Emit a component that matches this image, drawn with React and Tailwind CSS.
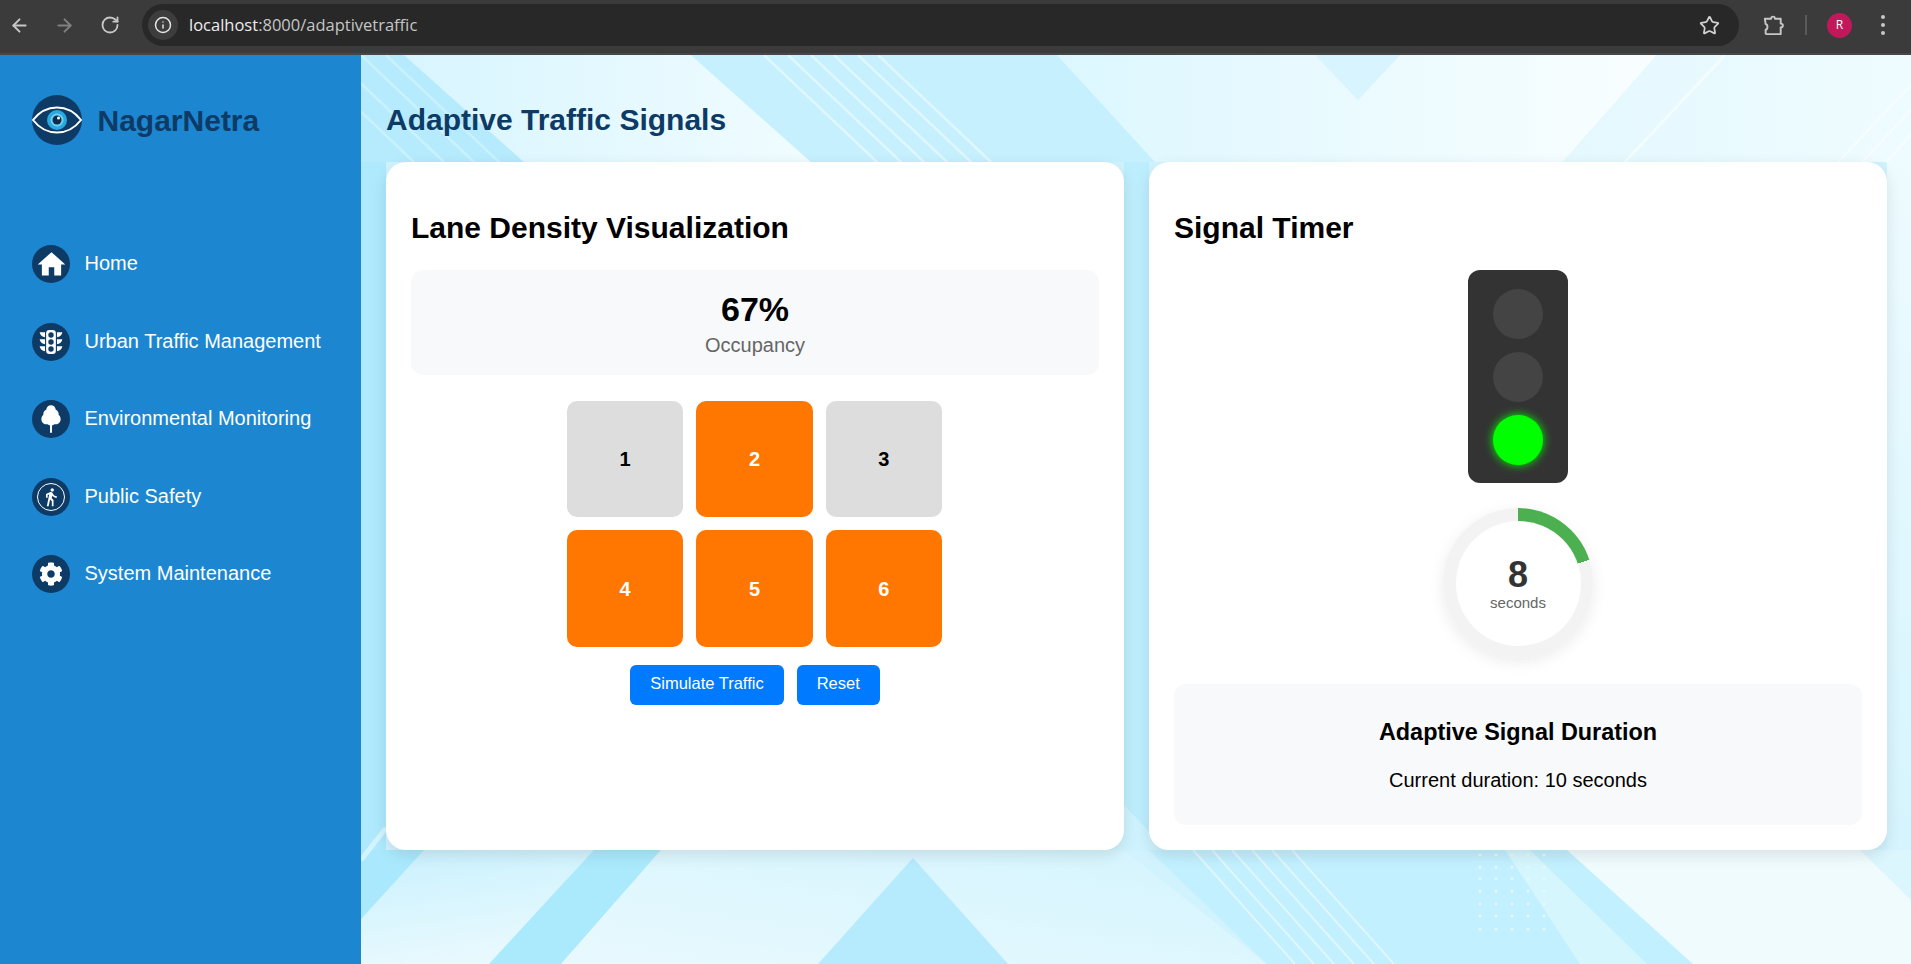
import { ArrowLeft, ArrowRight, RotateCw, Info, Star } from 'lucide-react';
import { FaCog } from 'react-icons/fa';
import { MdDirectionsWalk, MdHome } from 'react-icons/md';

const sans = "font-['Liberation_Sans',Arial,sans-serif]";

function BrowserBar() {
  return (
    <div className="h-[55px] bg-[#3b3b3b] border-b-2 border-[#474747] pb-[3px] flex items-center font-['Open_Sans',sans-serif]">
      <div className="w-[142px] shrink-0 flex items-center pl-[9px] gap-[24px] text-[#c7c7c7]">
        <ArrowLeft className="w-[21px] h-[21px]" strokeWidth={2.2} />
        <ArrowRight className="w-[21px] h-[21px] text-[#808080]" strokeWidth={2.2} />
        <RotateCw className="w-[20px] h-[20px] ml-[1px]" strokeWidth={2.2} />
      </div>
      <div className="w-[1597px] h-[42px] bg-[#282828] rounded-full flex items-center pl-[6px] pr-[19px]">
        <div className="w-[30px] h-[30px] rounded-full bg-[#3d3d3d] flex items-center justify-center text-[#e4e4e4]">
          <Info className="w-[18px] h-[18px]" strokeWidth={2} />
        </div>
        <div className="ml-[11px] text-[16.500px] text-[#c4c7c5]">
          <span className="text-[#ededed]">localhost</span>:8000/adaptivetraffic
        </div>
        <Star className="w-[21px] h-[21px] ml-auto text-[#d0d0d0]" strokeWidth={2} />
      </div>
      <div className="flex-1 flex items-center pl-[23px]">
        <svg viewBox="0 0 24 24" className="w-[23px] h-[23px]" fill="none" stroke="#c7c7c7" strokeWidth="2" strokeLinejoin="round">
          <path d="M3 5h6.500c0-3 4-3 4 0h6v5c3 0 3 4 0 4v7H5c-.8 0-1.200-.5-1.200-1v-3.500c2.500-.5 2.500-5.500 0-6L3 5z" />
        </svg>
        <div className="w-[2px] h-[20px] bg-[#5a5a5a] ml-[20px]" />
        <div className="w-[25px] h-[25px] rounded-full bg-[#c2185b] ml-[20px] flex items-center justify-center text-white text-[12px]">R</div>
        <div className="ml-[29px] flex flex-col gap-[4px]">
          <div className="w-[4px] h-[4px] rounded-full bg-[#c7c7c7]" />
          <div className="w-[4px] h-[4px] rounded-full bg-[#c7c7c7]" />
          <div className="w-[4px] h-[4px] rounded-full bg-[#c7c7c7]" />
        </div>
      </div>
    </div>
  );
}

function Logo() {
  return (
    <svg viewBox="0 0 50 50" className="w-[50px] h-[50px] shrink-0">
      <circle cx="25" cy="25" r="25" fill="#0d3b66" />
      <path d="M1 25C8 16 16 12.500 25 12.500S42 16 49 25C42 34 34 37.500 25 37.500S8 34 1 25z" fill="none" stroke="white" strokeWidth="2" />
      <circle cx="25" cy="25" r="10" fill="#29a9e0" />
      <circle cx="25" cy="25" r="6.500" fill="#6fd0f2" />
      <circle cx="25" cy="25" r="4.500" fill="#0d2b4a" />
      <circle cx="26.500" cy="23" r="1.500" fill="white" />
    </svg>
  );
}

function TrafficIcon() {
  return (
    <svg viewBox="0 0 24 24" className="w-[26px] h-[26px]" fill="white">
      <rect x="7.500" y="1" width="9" height="22" rx="3" />
      <circle cx="12" cy="5.500" r="2.500" fill="#0d3b66" />
      <circle cx="12" cy="12" r="2.500" fill="#0d3b66" />
      <circle cx="12" cy="18.500" r="2.500" fill="#0d3b66" />
      <path d="M1.500 3h5v4.500C4 7.500 2 5.500 1.500 3zM1.500 9.500h5V14C4 14 2 12 1.500 9.500zM1.500 16h5v4.500C4 20.500 2 18.500 1.500 16z" />
      <path d="M22.500 3h-5v4.500c2.500 0 4.500-2 5-4.500zM22.500 9.500h-5V14c2.500 0 4.500-2 5-4.500zM22.500 16h-5v4.500c2.500 0 4.500-2 5-4.500z" />
    </svg>
  );
}

function TreeIcon() {
  return (
    <svg viewBox="0 0 24 24" className="w-[30px] h-[30px]" fill="white">
      <path d="M12 1c-2.200 0-3.600 1.700-3.800 3.600C6.600 5.300 5.600 6.900 5.900 8.600 4.500 9.800 3.900 11.800 4.500 13.500c.7 1.900 2.600 3 4.700 2.700.8.600 1.500.9 2 .9V23h1.600v-5.900c.5 0 1.200-.3 2-.9 2.100.3 4-.8 4.700-2.700.6-1.700 0-3.700-1.400-4.900.3-1.700-.7-3.300-2.300-4C15.600 2.700 14.200 1 12 1z" />
    </svg>
  );
}

function WalkIcon() {
  return (
    <div className="w-[28px] h-[28px] rounded-full border-[1.500px] border-white flex items-center justify-center">
      <MdDirectionsWalk className="w-[20px] h-[20px] text-white" />
    </div>
  );
}

const navItems = [
  { label: 'Home', icon: <MdHome className="w-[33px] h-[33px] text-white" /> },
  { label: 'Urban Traffic Management', icon: <TrafficIcon /> },
  { label: 'Environmental Monitoring', icon: <TreeIcon /> },
  { label: 'Public Safety', icon: <WalkIcon /> },
  { label: 'System Maintenance', icon: <FaCog className="w-[24px] h-[24px] text-white" /> },
];

function Sidebar() {
  return (
    <aside className="w-[361px] shrink-0 bg-[#1c86d1] pl-[32px] pt-[40px]">
      <div className="flex items-center gap-[15.500px]">
        <Logo />
        <span className="text-[30px] font-bold text-[#0d3b66]">NagarNetra</span>
      </div>
      <nav className="mt-[100px] flex flex-col gap-[39.600px]">
        {navItems.map((item) => (
          <div key={item.label} className="flex items-center gap-[14.500px] text-white text-[20px]">
            <div className="w-[38px] h-[38px] rounded-full bg-[#0d3b66] flex items-center justify-center">
              {item.icon}
            </div>
            <span className="pb-[2px]">{item.label}</span>
          </div>
        ))}
      </nav>
    </aside>
  );
}

// decorative backdrop artwork, coordinates are page pixels
function Backdrop() {
  const hatchTop = [764, 788, 811, 834, 858, 878];
  const hatchCorner = [-60, -30, 0, 25];
  const hatchBottom = [1193, 1212, 1232, 1252, 1272, 1292];
  const dotXs = [1480, 1496, 1512, 1528, 1544];
  const dotYs = [855, 867, 879, 891, 904, 916, 929];
  return (
    <svg viewBox="361 55 1550 909" preserveAspectRatio="none" className="absolute inset-0 w-full h-full blur-[0.6px]">
      <defs>
        <linearGradient id="leftLight" x1="0" y1="0" x2="1" y2="0">
          <stop offset="0" stopColor="#d8f5ff" />
          <stop offset="1" stopColor="#f0fcff" />
        </linearGradient>
        <linearGradient id="topMid" x1="0" y1="0" x2="1" y2="0">
          <stop offset="0" stopColor="#dcf7ff" />
          <stop offset="1" stopColor="#f9feff" />
        </linearGradient>
        <linearGradient id="topRight" x1="0" y1="0" x2="1" y2="0">
          <stop offset="0" stopColor="#e4f8fe" />
          <stop offset="1" stopColor="#effcff" />
        </linearGradient>
        <linearGradient id="botLight" x1="0" y1="0" x2="0.300" y2="1">
          <stop offset="0" stopColor="#c9f1fe" />
          <stop offset="1" stopColor="#e8f9fe" />
        </linearGradient>
        <linearGradient id="botMid" x1="0" y1="1" x2="1" y2="0">
          <stop offset="0" stopColor="#e8f9fe" />
          <stop offset="1" stopColor="#d4f4fe" />
        </linearGradient>
        <linearGradient id="sideRight" x1="0" y1="0" x2="0" y2="1">
          <stop offset="0" stopColor="#eefbff" />
          <stop offset="1" stopColor="#d6f4fe" />
        </linearGradient>
      </defs>
      <rect x="361" y="55" width="1550" height="909" fill="#d0f3fe" />

      {/* upper left */}
      <polygon points="361,55 404,55 524,162 361,162" fill="#b5ebfd" />
      <g stroke="#c9f1fe" strokeWidth="2.500" fill="none">
        {hatchCorner.map((x) => (
          <line key={x} x1={361 + x} y1="55" x2={361 + x + 113} y2="162" />
        ))}
      </g>
      <polygon points="404,55 691,55 811,162 524,162" fill="url(#leftLight)" />

      {/* upper middle band */}
      <polygon points="691,55 1057,55 1155,162 811,162" fill="#c6f0fe" />
      <g stroke="#dff7ff" strokeWidth="2.500" fill="none">
        {hatchTop.map((x) => (
          <line key={x} x1={x} y1="55" x2={x + 113} y2="162" />
        ))}
      </g>
      <polygon points="1057,55 1657,55 1563,162 1155,162" fill="url(#topMid)" />
      <polygon points="1315,55 1400,55 1358,100" fill="#d8f4fe" />
      <polygon points="1657,55 1911,55 1911,162 1563,162" fill="url(#topRight)" />
      <line x1="1725" y1="55" x2="1625" y2="162" stroke="#f2fdff" strokeWidth="3" />
      <g stroke="#f6fdff" strokeWidth="2" fill="none">
        <line x1="1911" y1="85" x2="1838" y2="162" />
        <line x1="1911" y1="110" x2="1862" y2="162" />
        <line x1="1911" y1="135" x2="1886" y2="162" />
      </g>

      {/* strips beside and between the cards */}
      <rect x="361" y="162" width="25" height="700" fill="#aee9fd" />
      <polygon points="1124,162 1149,162 1149,832 1124,805" fill="#bdeefe" />
      <polygon points="1124,805 1149,832 1149,850 1124,850" fill="#cef3fe" />
      <rect x="1887" y="162" width="24" height="690" fill="url(#sideRight)" />

      {/* lower area */}
      <polygon points="424,850 594,850 489,964 361,964 361,919" fill="url(#botLight)" />
      <polygon points="361,850 424,850 361,919" fill="#aae9fd" />
      <line x1="361" y1="860" x2="386" y2="828" stroke="#d3f4fe" strokeWidth="5" />
      <polygon points="594,850 661,850 561,964 489,964" fill="#abeafd" />
      <polygon points="661,850 1124,850 1267,964 561,964" fill="url(#botMid)" />
      <polygon points="913,858 1008,964 818,964" fill="#b5ebfd" />

      <polygon points="1149,850 1567,850 1693,964 1267,964" fill="#c2f0fe" />
      <g stroke="#dff7ff" strokeWidth="2" fill="none">
        {hatchBottom.map((x) => (
          <line key={x} x1={x} y1="850" x2={x + 102} y2="964" />
        ))}
      </g>
      <polygon points="1505,850 1530,850 1647,964 1580,964" fill="#d6f6fe" />
      <polygon points="1567,850 1911,850 1911,964 1693,964" fill="#f0fbfe" />
      <polygon points="1860,850 1911,850 1911,900" fill="#dcf6fe" />
      <g fill="#e4f9ff">
        {dotXs.map((x) => dotYs.map((y) => <circle key={`${x}-${y}`} cx={x} cy={y} r="1.500" />))}
      </g>
    </svg>
  );
}

function Lane({ n, busy }) {
  return (
    <div className={busy
      ? 'h-[116.400px] rounded-[10px] bg-[#ff7700] text-white flex items-center justify-center font-bold text-[20px]'
      : 'h-[116.400px] rounded-[10px] bg-[#dddddd] text-black flex items-center justify-center font-bold text-[20px]'}>
      {n}
    </div>
  );
}

function LaneCard() {
  return (
    <section className="bg-white rounded-[20px] p-[25px] shadow-[0_5px_15px_rgba(0,0,0,0.1)] relative">
      <h2 className="mt-[24px] mb-[26px] text-[30px] font-bold text-black leading-[33px]">Lane Density Visualization</h2>
      <div className="h-[105px] bg-[#f8f9fa] rounded-[12px] flex flex-col items-center pt-[19px]">
        <div className="text-[34px] font-bold text-black leading-[40px]">67%</div>
        <div className="text-[20px] text-[#666666] leading-[22px] mt-[5px]">Occupancy</div>
      </div>
      <div className="w-[375px] ml-[156px] mt-[26px] grid grid-cols-3 gap-[13px]">
        <Lane n={1} />
        <Lane n={2} busy />
        <Lane n={3} />
        <Lane n={4} busy />
        <Lane n={5} busy />
        <Lane n={6} busy />
      </div>
      <div className="mt-[18px] flex justify-center gap-[13px]">
        <button className="h-[40px] px-[20px] pb-[2px] bg-[#007bff] text-white rounded-[6px] text-[16.500px]">Simulate Traffic</button>
        <button className="h-[40px] px-[20px] pb-[2px] bg-[#007bff] text-white rounded-[6px] text-[16.500px]">Reset</button>
      </div>
    </section>
  );
}

function Light({ on }) {
  return (
    <div className={on
      ? 'w-[50px] h-[50px] rounded-full bg-[#00ff00] shadow-[0_0_10px_#00ff00]'
      : 'w-[50px] h-[50px] rounded-full bg-[#444444]'} />
  );
}

function TimerCard() {
  return (
    <section className="bg-white rounded-[20px] p-[25px] shadow-[0_5px_15px_rgba(0,0,0,0.1)] relative">
      <h2 className="mt-[24px] mb-[26px] text-[30px] font-bold text-black leading-[33px]">Signal Timer</h2>
      <div className="w-[100px] h-[213px] mx-auto bg-[#333333] rounded-[12px] flex flex-col items-center pt-[19px] gap-[13px]">
        <Light />
        <Light />
        <Light on />
      </div>
      <div className="w-[150px] h-[150px] mx-auto mt-[25px] rounded-full bg-[conic-gradient(#4caf50_0deg_72deg,#f3f3f3_72deg)] shadow-[0_4px_15px_rgba(0,0,0,0.08)] flex items-center justify-center">
        <div className="w-[125px] h-[125px] rounded-full bg-white flex flex-col items-center justify-center">
          <div className="text-[36px] font-bold text-[#333333] leading-[38px]">8</div>
          <div className="text-[15px] text-[#666666] leading-[17px]">seconds</div>
        </div>
      </div>
      <div className="mt-[26px] h-[141px] bg-[#f8f9fa] rounded-[12px] flex flex-col items-center pt-[35px]">
        <div className="text-[23.400px] font-bold text-black leading-[26px]">Adaptive Signal Duration</div>
        <div className="text-[20px] text-black leading-[22px] mt-[24px]">Current duration: 10 seconds</div>
      </div>
    </section>
  );
}

export default function App() {
  return (
    <div className={`${sans} w-[1911px] h-[964px] overflow-hidden flex flex-col`}>
      <BrowserBar />
      <div className="flex-1 flex min-h-0">
        <Sidebar />
        <main className="flex-1 relative overflow-hidden">
          <Backdrop />
          <div className="relative pl-[25px] pr-[24px] pt-[48px]">
            <h1 className="text-[30px] font-bold text-[#0d3b66] leading-[33px] mb-[26px]">Adaptive Traffic Signals</h1>
            <div className="grid grid-cols-2 gap-[25px]">
              <LaneCard />
              <TimerCard />
            </div>
          </div>
        </main>
      </div>
    </div>
  );
}
